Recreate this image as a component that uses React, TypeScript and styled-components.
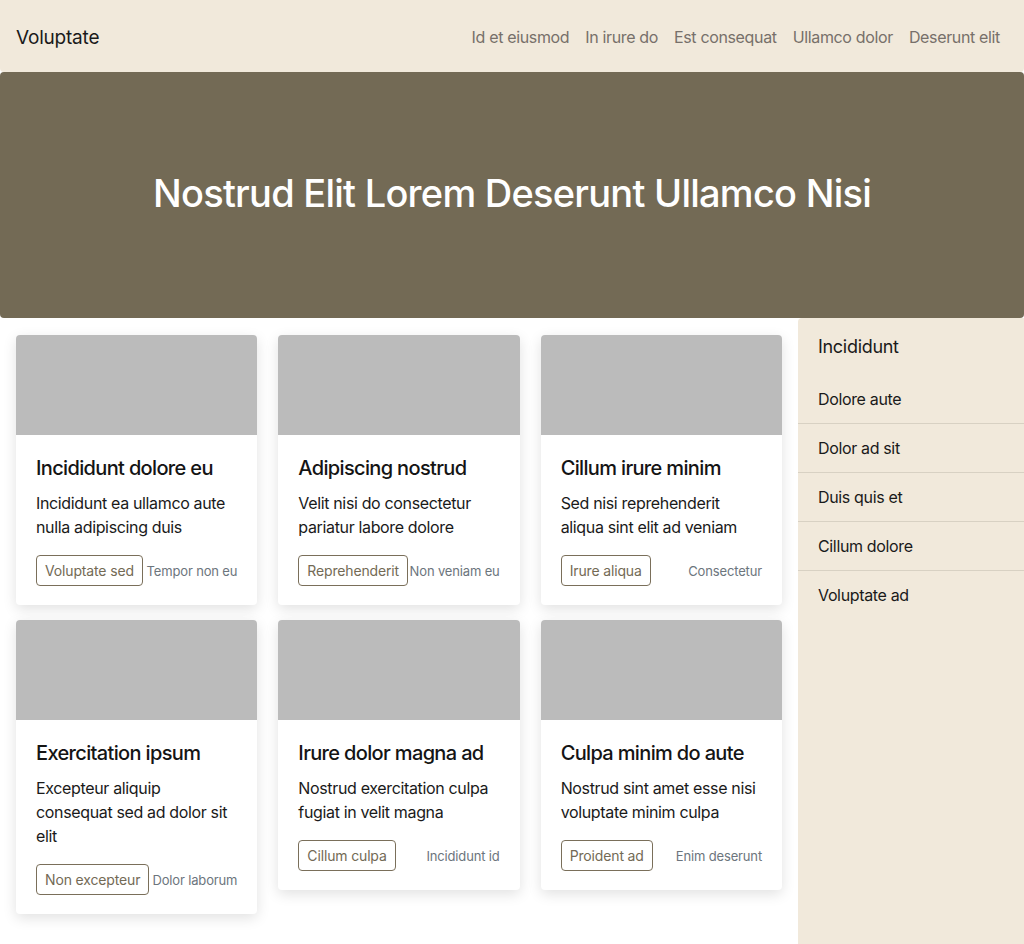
import React from "react";
import styled, { createGlobalStyle } from "styled-components";

const GlobalStyle = createGlobalStyle`
  * { box-sizing: border-box; }
  html, body { margin: 0; padding: 0; background: #ffffff; }
  body {
    font-family: Inter, "Noto Sans", "Liberation Sans", sans-serif;
    color: #1a1a1a;
    -webkit-font-smoothing: antialiased;
  }
`;

const Page = styled.div`
  min-height: 944px;
  display: flex;
  flex-direction: column;
`;

const NavBar = styled.nav`
  height: 72px;
  background: #f1e9db;
  border-radius: 0 0 4px 4px;
  display: flex;
  align-items: center;
  justify-content: space-between;
  padding: 2px 16px 0 16px;
`;

const Brand = styled.a`
  font-size: 19px;
  letter-spacing: -0.2px;
  color: #1a1a1a;
  text-decoration: none;
`;

const NavLinks = styled.div`
  display: flex;
`;

const NavLink = styled.a`
  font-size: 16px;
  letter-spacing: -0.35px;
  color: #77706a;
  padding: 0 8px;
  text-decoration: none;
`;

const Hero = styled.header`
  height: 246px;
  background: #736a55;
  border-radius: 4px;
  display: flex;
  align-items: center;
  justify-content: center;
  padding-bottom: 4px;
`;

const HeroTitle = styled.h1`
  margin: 0;
  color: #ffffff;
  font-size: 38px;
  font-weight: 500;
  letter-spacing: -0.75px;
`;

const Main = styled.div`
  flex: 1;
  display: flex;
  align-items: stretch;
`;

const CardGrid = styled.section`
  flex: 1;
  display: grid;
  grid-template-columns: repeat(3, 1fr);
  column-gap: 21px;
  row-gap: 15px;
  padding: 17px 16px 16px 16px;
  align-items: start;
  align-content: start;
`;

const Card = styled.article`
  background: #ffffff;
  border-radius: 4px;
  overflow: hidden;
  box-shadow: 0 4px 14px rgba(0, 0, 0, 0.12);
`;

const CardImage = styled.div`
  height: 100px;
  background: #bbbbbb;
`;

const CardBody = styled.div`
  padding: 21px 20px 19px 20px;
`;

const CardTitle = styled.h3`
  margin: 0 0 11px 0;
  font-size: 20px;
  line-height: 24px;
  font-weight: 500;
  color: #141414;
  letter-spacing: -0.65px;
`;

const CardText = styled.p`
  margin: 0 0 16px 0;
  font-size: 16px;
  line-height: 24px;
  letter-spacing: -0.35px;
  color: #1a1a1a;
`;

const CardFooter = styled.div`
  display: flex;
  align-items: center;
  justify-content: space-between;
`;

const OutlineButton = styled.button`
  font-family: inherit;
  font-size: 14px;
  line-height: 21px;
  letter-spacing: -0.15px;
  padding: 4px 8px;
  color: #736a55;
  background: transparent;
  border: 1px solid #7a6f5a;
  border-radius: 4px;
  white-space: nowrap;
`;

const Muted = styled.small`
  font-size: 13px;
  letter-spacing: -0.15px;
  color: #6c757d;
  white-space: nowrap;
`;

const Sidebar = styled.aside`
  width: 226px;
  background: #f1e9db;
  border-radius: 4px 0 0 0;
  padding: 16px 0;
`;

const SideTitle = styled.h4`
  margin: 0 0 15px 0;
  padding: 0 20px;
  font-size: 18px;
  line-height: 26px;
  font-weight: 400;
  letter-spacing: -0.3px;
  color: #1a1a1a;
`;

const SideList = styled.ul`
  list-style: none;
  margin: 0;
  padding: 0;
`;

const SideItem = styled.li`
  padding: 12px 20px;
  font-size: 16px;
  line-height: 24px;
  letter-spacing: -0.35px;
  color: #1a1a1a;
  border-bottom: 1px solid #d8d1c3;
  &:last-child { border-bottom: none; }
`;

const cards = [
  { title: "Incididunt dolore eu", text: "Incididunt ea ullamco aute nulla adipiscing duis", button: "Voluptate sed", note: "Tempor non eu" },
  { title: "Adipiscing nostrud", text: "Velit nisi do consectetur pariatur labore dolore", button: "Reprehenderit", note: "Non veniam eu" },
  { title: "Cillum irure minim", text: "Sed nisi reprehenderit aliqua sint elit ad veniam", button: "Irure aliqua", note: "Consectetur" },
  { title: "Exercitation ipsum", text: "Excepteur aliquip consequat sed ad dolor sit elit", button: "Non excepteur", note: "Dolor laborum" },
  { title: "Irure dolor magna ad", text: "Nostrud exercitation culpa fugiat in velit magna", button: "Cillum culpa", note: "Incididunt id" },
  { title: "Culpa minim do aute", text: "Nostrud sint amet esse nisi voluptate minim culpa", button: "Proident ad", note: "Enim deserunt" },
];

const navItems = ["Id et eiusmod", "In irure do", "Est consequat", "Ullamco dolor", "Deserunt elit"];
const sideItems = ["Dolore aute", "Dolor ad sit", "Duis quis et", "Cillum dolore", "Voluptate ad"];

export default function App() {
  return (
    <>
      <GlobalStyle />
      <Page>
        <NavBar>
          <Brand href="#">Voluptate</Brand>
          <NavLinks>
            {navItems.map((n) => (
              <NavLink key={n} href="#">{n}</NavLink>
            ))}
          </NavLinks>
        </NavBar>
        <Hero>
          <HeroTitle>Nostrud Elit Lorem Deserunt Ullamco Nisi</HeroTitle>
        </Hero>
        <Main>
          <CardGrid>
            {cards.map((c) => (
              <Card key={c.title}>
                <CardImage />
                <CardBody>
                  <CardTitle>{c.title}</CardTitle>
                  <CardText>{c.text}</CardText>
                  <CardFooter>
                    <OutlineButton>{c.button}</OutlineButton>
                    <Muted>{c.note}</Muted>
                  </CardFooter>
                </CardBody>
              </Card>
            ))}
          </CardGrid>
          <Sidebar>
            <SideTitle>Incididunt</SideTitle>
            <SideList>
              {sideItems.map((s) => (
                <SideItem key={s}>{s}</SideItem>
              ))}
            </SideList>
          </Sidebar>
        </Main>
      </Page>
    </>
  );
}
